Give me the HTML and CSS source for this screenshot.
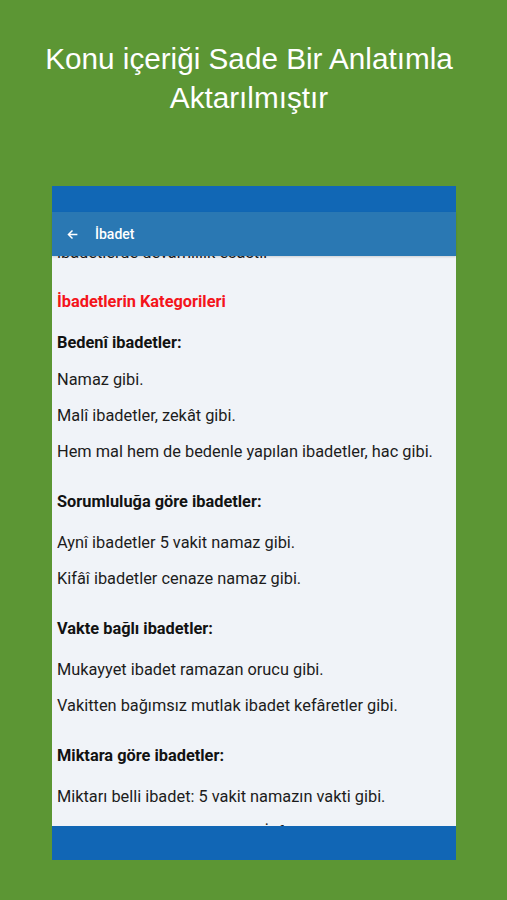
FILE: index.html
```html
<!DOCTYPE html>
<html lang="tr">
<head>
<meta charset="utf-8">
<link rel="stylesheet" href="styles.css">
</head>
<body>
<div class="page">
  <h1 class="headline">Konu içeriği Sade Bir Anlatımla<br>Aktarılmıştır</h1>
  <div class="phone">
    <div class="statusbar"></div>
    <div class="toolbar">
      <svg class="back" width="16" height="16" viewBox="0 0 16 16"><path d="M14 8H3M8 3L3 8l5 5" fill="none" stroke="#fff" stroke-width="1.8"/></svg>
      <span class="title">İbadet</span>
    </div>
    <div class="content">
      <div class="scroll">
        <p class="txt">ibadetlerde devamlılık esastır</p>
        <p class="hd red">İbadetlerin Kategorileri</p>
        <p class="hd first">Bedenî ibadetler:</p>
        <p class="txt">Namaz gibi.</p>
        <p class="txt">Malî ibadetler, zekât gibi.</p>
        <p class="txt">Hem mal hem de bedenle yapılan ibadetler, hac gibi.</p>
        <p class="hd">Sorumluluğa göre ibadetler:</p>
        <p class="txt">Aynî ibadetler 5 vakit namaz gibi.</p>
        <p class="txt">Kifâî ibadetler cenaze namaz gibi.</p>
        <p class="hd">Vakte bağlı ibadetler:</p>
        <p class="txt">Mukayyet ibadet ramazan orucu gibi.</p>
        <p class="txt">Vakitten bağımsız mutlak ibadet kefâretler gibi.</p>
        <p class="hd">Miktara göre ibadetler:</p>
        <p class="txt">Miktarı belli ibadet: 5 vakit namazın vakti gibi.</p>
        <p class="txt">Miktarı belli olmayan ibadet: İnfâk etmek gibi.</p>
      </div>
    </div>
    <div class="navbar"></div>
  </div>
</div>
</body>
</html>
```
FILE: styles.css
```css
html, body {
  margin: 0;
  padding: 0;
}
body {
  background: #5c9634;
  width: 507px;
  height: 900px;
  overflow: hidden;
}
.page {
  display: flex;
  flex-direction: column;
  align-items: center;
}
.headline {
  margin: 39px 9px 0 0;
  font-family: "Liberation Sans", Arial, sans-serif;
  font-weight: normal;
  font-size: 29.7px;
  line-height: 39px;
  color: #ffffff;
  text-align: center;
  height: 147px;
  white-space: nowrap;
}
.phone {
  width: 404px;
  margin-left: 1px;
  display: flex;
  flex-direction: column;
  background: #f0f3f8;
}
.statusbar {
  height: 26px;
  background: #1167b5;
}
.toolbar {
  height: 44px;
  background: #2a78b3;
  display: flex;
  align-items: center;
  padding-left: 14px;
  box-shadow: 0 1px 2px rgba(0,0,0,0.15);
  position: relative;
  z-index: 1;
}
.back {
  width: 13px;
  height: 13px;
}
.title {
  margin-left: 16px;
  font-family: Roboto, sans-serif;
  font-weight: 500;
  font-size: 14px;
  color: #ffffff;
}
.content {
  height: 570px;
  overflow: hidden;
}
.scroll {
  margin-top: -13px;
  padding: 0 8px 0 5px;
}
.txt, .hd {
  margin: 0;
  font-family: Roboto, sans-serif;
  font-size: 16.35px;
  line-height: 20px;
  color: #1c1c1c;
  white-space: nowrap;
}
.txt {
  margin-bottom: 16px;
}
.hd {
  font-weight: bold;
  margin-top: 30px;
  margin-bottom: 21px;
  color: #121212;
}
.hd.red {
  color: #f4141b;
  margin-top: 29px;
  margin-bottom: 21px;
}
.hd.first {
  margin-top: 0;
  margin-bottom: 17px;
}
.navbar {
  height: 34px;
  background: #1166b5;
}
```
